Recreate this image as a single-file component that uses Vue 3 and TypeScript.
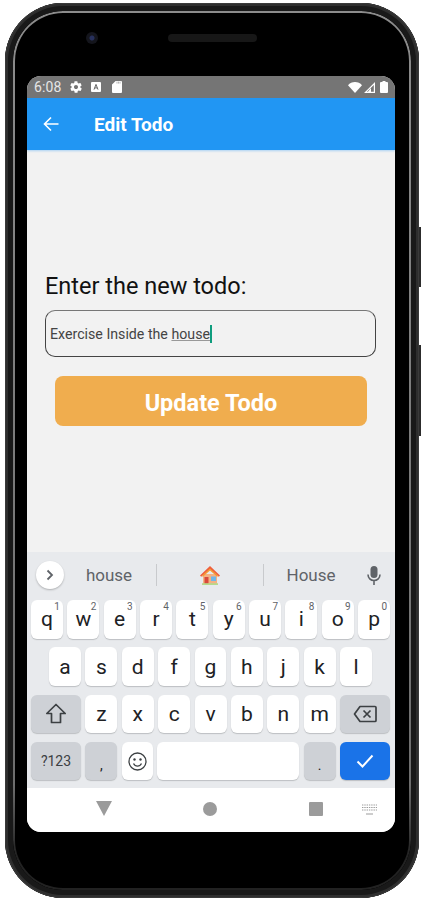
<script setup lang="ts">
const row1 = [
  ['q', '1'], ['w', '2'], ['e', '3'], ['r', '4'], ['t', '5'],
  ['y', '6'], ['u', '7'], ['i', '8'], ['o', '9'], ['p', '0'],
]
const row2 = ['a', 's', 'd', 'f', 'g', 'h', 'j', 'k', 'l']
const row3 = ['z', 'x', 'c', 'v', 'b', 'n', 'm']
</script>

<template>
  <div class="page">
    <div class="phone">
      <span class="ring"></span>
      <span class="side-btn power"></span>
      <span class="side-btn volume"></span>
      <div class="bezel-top">
        <span class="camera"></span>
        <span class="speaker"></span>
      </div>
      <div class="screen">
        <div class="status">
          <span class="time">6:08</span>
          <svg class="st-icon" width="14" height="14" viewBox="0 0 24 24"><path fill="#fff" d="M19.4 13c0-.3.1-.6.1-1s0-.7-.1-1l2.1-1.6c.2-.2.2-.4.1-.6l-2-3.5c-.1-.2-.4-.3-.6-.2l-2.5 1c-.5-.4-1.1-.7-1.7-1l-.4-2.6c0-.3-.2-.4-.5-.4h-4c-.2 0-.5.2-.5.4l-.4 2.7c-.6.2-1.1.6-1.7 1l-2.5-1c-.2-.1-.5 0-.6.2l-2 3.5c-.1.2 0 .4.1.6L4.6 11c0 .3-.1.7-.1 1s0 .7.1 1l-2.1 1.6c-.2.2-.2.4-.1.6l2 3.5c.1.2.4.3.6.2l2.5-1c.5.4 1.1.7 1.7 1l.4 2.6c0 .2.2.4.5.4h4c.2 0 .5-.2.5-.4l.4-2.6c.6-.3 1.2-.6 1.7-1l2.5 1c.2.1.5 0 .6-.2l2-3.5c.1-.2.1-.5-.1-.6L19.4 13zM12 15.5c-1.9 0-3.5-1.6-3.5-3.5s1.6-3.5 3.500-3.500 3.500 1.600 3.500 3.500-1.600 3.500-3.500 3.500z"/></svg>
          <svg class="st-icon a" width="10" height="10" viewBox="0 0 10 10"><rect width="10" height="10" rx="1" fill="#fff"/><path d="M3 7.600 5 2.400l2 5.200M3.800 5.900h2.400" fill="none" stroke="#666" stroke-width="1"/></svg>
          <svg class="st-icon sd" width="10" height="12" viewBox="0 0 10 12"><path fill="#fff" d="M3.600 0H9a1 1 0 0 1 1 1v10a1 1 0 0 1-1 1H1a1 1 0 0 1-1-1V3.600z"/><path stroke="#888" stroke-width=".6" d="M5 .6v2M6.500.6v2M8 .6v2"/></svg>
          <span class="grow"></span>
          <svg width="14" height="11" viewBox="0 0 14 11"><path fill="#fff" d="M0 3.200C1.800 1.200 4.200 0 7 0s5.200 1.200 7 3.200L7 11z"/></svg>
          <svg class="signal" width="12" height="11" viewBox="0 0 12 11"><path fill="#fff" d="M0 11 11 0v11zM9.800 3 2.900 9.800h6.900z" fill-rule="evenodd"/><path fill="#fff" d="M3 11 7 6v5z"/></svg>
          <svg class="battery" width="8" height="12" viewBox="0 0 8 12"><path fill="#fff" d="M2.500 0h3v1H7a1 1 0 0 1 1 1v9a1 1 0 0 1-1 1H1a1 1 0 0 1-1-1V2a1 1 0 0 1 1-1h1.500z"/></svg>
        </div>
        <header class="appbar">
          <svg class="back" width="16" height="16" viewBox="0 0 16 16"><path d="M15.500 8H1.500M8 1.500 1.500 8 8 14.500" fill="none" stroke="#fff" stroke-width="1.600"/></svg>
          <h1 class="title">Edit Todo</h1>
        </header>
        <main class="content">
          <label class="label">Enter the new todo:</label>
          <div class="input">Exercise Inside the <span class="composing">house</span><span class="caret"></span></div>
          <button class="update" type="button">Update Todo</button>
        </main>
        <section class="keyboard">
          <div class="suggest">
            <span class="expand">
              <svg width="10" height="12" viewBox="0 0 10 12"><path d="M2.500 1.500 7 6l-4.500 4.500" fill="none" stroke="#5f6368" stroke-width="1.800"/></svg>
            </span>
            <span class="sug s1">house</span>
            <i class="divider"></i>
            <span class="sug s2">
              <svg width="22" height="20" viewBox="0 0 22 20">
                <path fill="#f4b183" d="M4 9h14v10H4z"/>
                <path fill="#ef5f3c" d="M11 1 1 10.500l1.200 1.300L11 4l8.800 7.800 1.200-1.300z"/>
                <path fill="#f59a2f" d="M11 3.500 3.500 10.200V12L11 5.500l7.500 6.500v-1.800z"/>
                <path fill="#d9483b" d="M5.500 12h4v7h-4z"/>
                <path fill="#6fb6e8" d="M12 11.500h5v4.500h-5z"/>
                <path fill="#b7d98c" d="M3 18.200h16V20H3z"/>
              </svg>
            </span>
            <i class="divider"></i>
            <span class="sug s3">House</span>
            <svg class="mic" width="14" height="19" viewBox="0 0 14 19"><rect x="3.500" y="0" width="7" height="12" rx="3.500" fill="#5f6368"/><path d="M1 8.500c0 3.500 2.700 6 6 6s6-2.500 6-6M7 14.500V19" fill="none" stroke="#5f6368" stroke-width="1.600"/></svg>
          </div>
          <div class="row">
            <span v-for="k in row1" :key="k[0]" class="key">{{ k[0] }}<sup class="hint">{{ k[1] }}</sup></span>
          </div>
          <div class="row row2">
            <span v-for="k in row2" :key="k" class="key">{{ k }}</span>
          </div>
          <div class="row">
            <span class="key mod wide">
              <svg width="22" height="21" viewBox="0 0 22 21"><path d="M11 1.500 1.800 10.500H6.500v9h9v-9h4.700z" fill="none" stroke="#3c4043" stroke-width="1.700" stroke-linejoin="round"/></svg>
            </span>
            <span v-for="k in row3" :key="k" class="key">{{ k }}</span>
            <span class="key mod wide">
              <svg width="24" height="18" viewBox="0 0 24 18"><path d="M7 1.500h15a1 1 0 0 1 1 1v13a1 1 0 0 1-1 1H7L1.500 9z" fill="none" stroke="#3c4043" stroke-width="1.700" stroke-linejoin="round"/><path d="m10.500 5.500 7 7m0-7-7 7" fill="none" stroke="#3c4043" stroke-width="1.700"/></svg>
            </span>
          </div>
          <div class="row">
            <span class="key mod wide sym">?123</span>
            <span class="key mod punct">,</span>
            <span class="key emoji">
              <svg width="19" height="19" viewBox="0 0 19 19"><circle cx="9.500" cy="9.500" r="8.500" fill="none" stroke="#3c4043" stroke-width="1.300"/><circle cx="6.500" cy="7.500" r="1.200" fill="#3c4043"/><circle cx="12.500" cy="7.500" r="1.200" fill="#3c4043"/><path d="M5.500 11.500c1 2 2.500 2.700 4 2.700s3-.7 4-2.700" fill="none" stroke="#3c4043" stroke-width="1.300"/></svg>
            </span>
            <span class="key space"></span>
            <span class="key mod punct">.</span>
            <span class="key wide go">
              <svg width="18" height="14" viewBox="0 0 18 14"><path d="m1.500 7.500 5 5L16.500 1.500" fill="none" stroke="#fff" stroke-width="2"/></svg>
            </span>
          </div>
        </section>
        <nav class="navbar">
          <span class="nav-slot"><svg width="16" height="15" viewBox="0 0 16 15"><path d="M0 0h16L8 15z" fill="#9b9b9b"/></svg></span>
          <span class="nav-slot"><svg width="14" height="14" viewBox="0 0 14 14"><circle cx="7" cy="7" r="7" fill="#9b9b9b"/></svg></span>
          <span class="nav-slot"><svg width="14" height="14" viewBox="0 0 14 14"><rect width="14" height="14" rx="1" fill="#9b9b9b"/></svg></span>
          <svg class="kb-icon" width="15" height="11" viewBox="0 0 15 11"><path d="M0 1h15M0 3.500h15M0 6h15" stroke="#9b9b9b" stroke-width="1" stroke-dasharray="1.400 .9"/><path d="M4 10h7" stroke="#9b9b9b" stroke-width="1"/></svg>
        </nav>
      </div>
    </div>
  </div>
</template>

<style>
html, body { margin: 0; background: #fff; }
</style>

<style scoped>
* { box-sizing: border-box; }
.page {
  width: 421px;
  height: 904px;
  padding: 3px 2px 0 5px;
  background: #fff;
  font-family: Roboto, "Liberation Sans", sans-serif;
}
.phone {
  position: relative;
  width: 414px;
  height: 895px;
  padding: 0 24px 0 22px;
  border-radius: 58px;
  background: #000;
  box-shadow:
    inset 0 0 0 1px #3a3a3a,
    inset 0 0 0 3px #2e2e2e,
    inset 0 0 0 8px #191919;
}
.ring {
  position: absolute;
  inset: 8px;
  border-radius: 50px;
  border: 2.500px solid transparent;
  background: linear-gradient(#8c8c8c, #6e6e6e 88%, #222 96%) border-box;
  -webkit-mask: linear-gradient(#000 0 0) padding-box, linear-gradient(#000 0 0) border-box;
  -webkit-mask-composite: xor;
  mask-composite: exclude;
}
.side-btn { position: absolute; right: -2px; width: 2px; background: #2c2c2c; }
.power { top: 224px; height: 60px; }
.volume { top: 342px; height: 91px; }
.bezel-top { position: relative; height: 73px; }
.camera {
  position: absolute; left: 59px; top: 29px;
  width: 12px; height: 12px; border-radius: 50%;
  background: radial-gradient(circle, #27305c 0 2px, #14151c 3px 6px);
}
.speaker {
  position: absolute; left: 141px; top: 31px;
  width: 89px; height: 8px; border-radius: 4px;
  background: #171717;
}
.screen {
  position: relative;
  width: 368px;
  height: 756px;
  display: flex;
  flex-direction: column;
  border-radius: 14px;
  overflow: hidden;
  background: #f2f2f2;
}
.status {
  height: 22px;
  flex: none;
  display: flex;
  align-items: center;
  padding: 0 7px 0 7px;
  background: #757575;
  color: #e6e6e6;
}
.time { font-size: 14px; width: 35px; letter-spacing: .1px; }
.st-icon { margin-right: 0; }
.st-icon.a { margin-left: 8px; }
.st-icon.sd { margin-left: 11px; }
.grow { flex: 1; }
.signal { margin-left: 2px; }
.battery { margin-left: 4px; }
.appbar {
  height: 52px;
  flex: none;
  display: flex;
  align-items: center;
  padding-left: 16px;
  background: #2196f3;
  box-shadow: 0 1px 2px rgba(33, 150, 243, .35);
  z-index: 1;
}
.back { flex: none; }
.title {
  margin: 0 0 0 35px;
  font-size: 19px;
  font-weight: 700;
  color: #fff;
}
.content {
  flex: 1;
  min-height: 0;
  display: flex;
  flex-direction: column;
  padding: 121px 19px 0 18px;
}
.label { font-size: 23.500px; line-height: 30px; color: #111; }
.input {
  height: 47px;
  margin-top: 9px;
  padding-left: 4px;
  border: 1px solid #444;
  border-top-color: #777;
  border-radius: 10px;
  display: flex;
  align-items: center;
  font-size: 14.200px;
  color: #444;
  white-space: pre;
}
.composing { text-decoration: underline; text-decoration-color: #999; }
.caret { width: 2px; height: 18px; background: #0f9d7e; margin-top: 1px; }
.update {
  height: 50px;
  margin: 19px 9px 0 10px;
  padding: 3px 0 0;
  border: 0;
  border-radius: 8px;
  background: #f0ad4e;
  color: #fff;
  font-family: inherit;
  font-size: 23.500px;
  font-weight: 700;
}
.keyboard {
  height: 236px;
  flex: none;
  padding: 0 5px 0 4px;
  background: #e8eaed;
}
.suggest {
  height: 48px;
  padding-bottom: 2px;
  display: flex;
  align-items: center;
  color: #5f6368;
  font-size: 17px;
}
.expand {
  flex: none;
  width: 28px; height: 28px;
  margin-left: 5px;
  border-radius: 50%;
  background: #fff;
  box-shadow: 0 1px 2px rgba(0, 0, 0, .25);
  display: flex; align-items: center; justify-content: center;
}
.sug { display: flex; justify-content: center; }
.s1 { width: 90px; }
.s2 { width: 106px; }
.s3 { width: 94px; }
.s1 + .divider { margin-left: 2px; }
.divider { width: 1px; height: 22px; flex: none; background: #c8cacd; }
.mic { margin-left: 9px; flex: none; }
.row {
  height: 38.500px;
  display: flex;
  gap: 4.400px;
  margin-bottom: 8.800px;
}
.row2 { padding: 0 18px; }
.key {
  position: relative;
  flex: 1 1 0;
  min-width: 0;
  display: flex;
  align-items: center;
  justify-content: center;
  border-radius: 6px;
  background: #fff;
  box-shadow: 0 1px 1px rgba(60, 64, 67, .25);
  color: #202124;
  font-size: 21px;
}
.hint {
  position: absolute;
  top: 2px; right: 3px;
  font-size: 10px;
  line-height: 1;
  color: #5f6368;
}
.mod { background: #ced1d6; }
.wide { flex: 0 0 50px; }
.sym { font-size: 14px; color: #3c4043; }
.punct { flex: 0 0 32px; align-items: flex-end; padding-bottom: 7px; font-size: 14px; }
.emoji { flex: 0 0 31px; }
.space { flex: 0 0 142px; }
.go { background: #1a73e8; }
.navbar {
  flex: none;
  height: 44px;
  position: relative;
  background: #fff;
}
.nav-slot { position: absolute; top: 13px; display: flex; }
.nav-slot:nth-child(1) { left: 69px; }
.nav-slot:nth-child(2) { left: 176px; top: 14px; }
.nav-slot:nth-child(3) { left: 282px; top: 14px; }
.kb-icon { position: absolute; left: 335px; top: 16px; }
</style>
